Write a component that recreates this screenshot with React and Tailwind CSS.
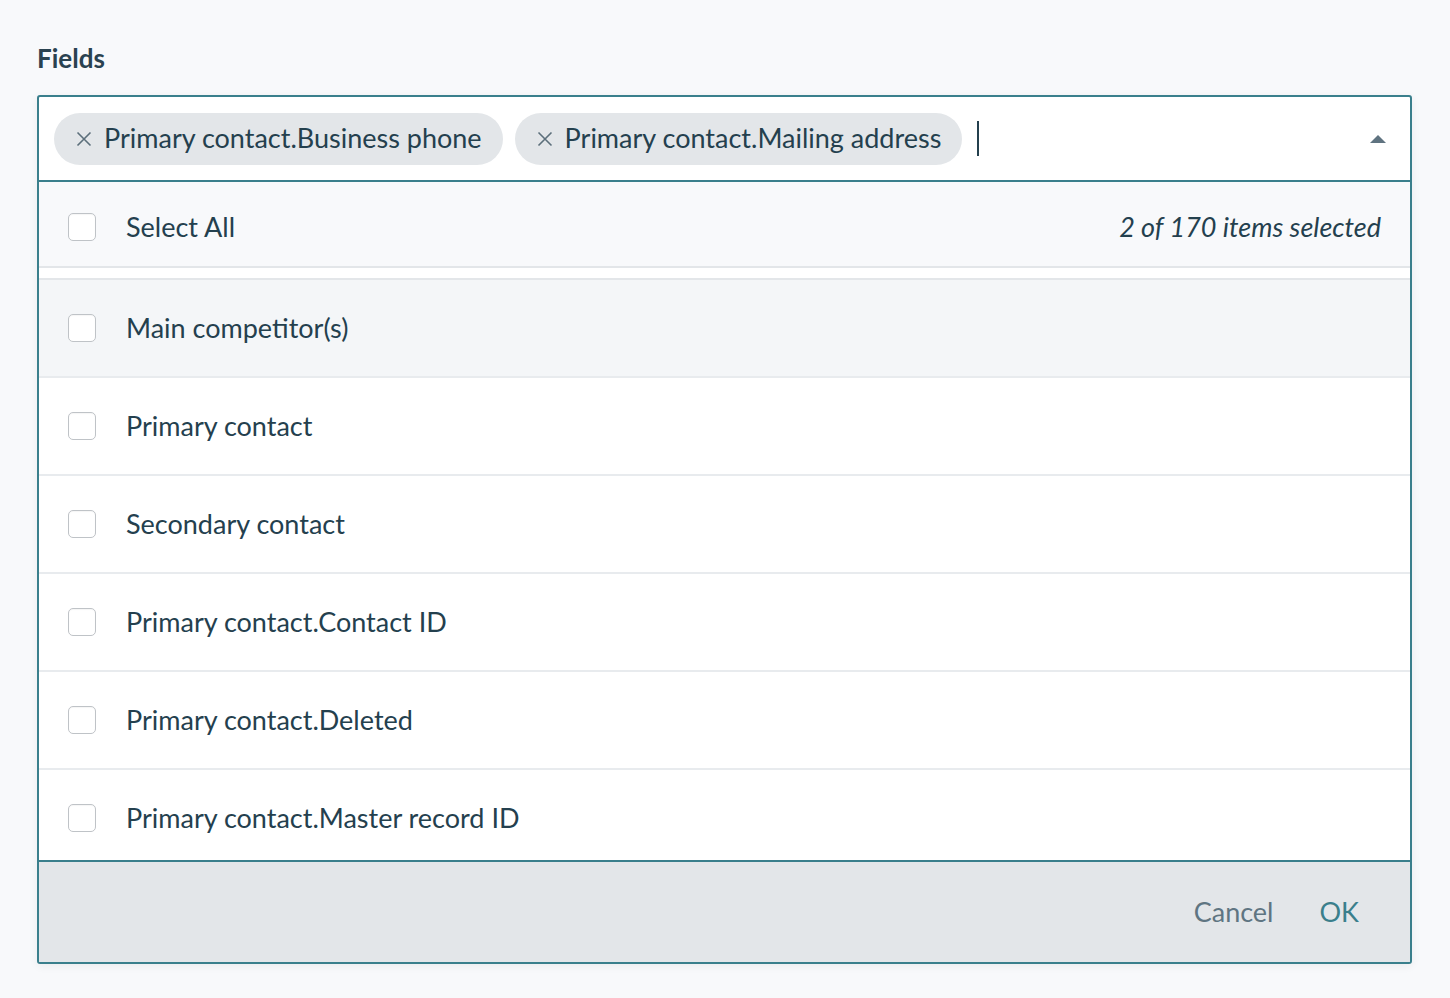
import React from 'react';

const rows = [
  'Main competitor(s)',
  'Primary contact',
  'Secondary contact',
  'Primary contact.Contact ID',
  'Primary contact.Deleted',
  'Primary contact.Master record ID',
];

const Checkbox = () => (
  <span className="block w-[28px] h-[28px] shrink-0 rounded-[5px] border border-[#bfc3c7] bg-white shadow-[inset_0_1px_1px_rgba(0,0,0,0.04)]" />
);

const Chip = ({ label }) => (
  <span className="flex items-center h-[52px] rounded-full bg-[#e3e6e9] pl-[22px] pr-[21px] gap-[12px] text-[27px] text-[#24404e]">
    <svg className="w-[16px] h-[16px]" viewBox="0 0 16 16" fill="none" stroke="#5c6f7b" strokeWidth="1.6">
      <path d="M1.5 1.5l13 13M14.5 1.5l-13 13" />
    </svg>
    {label}
  </span>
);

const Row = ({ label, shaded }) => (
  <div className={`flex items-center h-[98px] shrink-0 pl-[29px] border-b-2 border-[#e8ebee] ${shaded ? 'bg-[#f4f6f8]' : 'bg-white'}`}>
    <Checkbox />
    <span className="ml-[30px] text-[27px]">{label}</span>
  </div>
);

export default function App() {
  return (
    <div className="min-h-[998px] bg-[#f8f9fb] px-[37px] pt-[41px] font-['Lato',sans-serif] text-[#24404e]">
      <div className="text-[26px] font-bold leading-[34px] text-[#2a4250]">Fields</div>

      <div className="mt-[20px] w-[1375px] rounded-[3px] border-2 border-[#3a7f8c] bg-white shadow-[0_2px_10px_rgba(0,0,0,0.06)] overflow-hidden">
        {/* input with chips */}
        <div className="flex items-center h-[85px] pl-[15px] pr-[24px] gap-[12px] border-b-2 border-[#3a7f8c]">
          <Chip label="Primary contact.Business phone" />
          <Chip label="Primary contact.Mailing address" />
          <span className="ml-[3px] block w-[2px] h-[35px] bg-[#24404e]" />
          <div className="flex-1" />
          <svg className="w-[16px] h-[8px]" viewBox="0 0 16 8">
            <path d="M0 8L8 0l8 8z" fill="#5f7380" />
          </svg>
        </div>

        {/* select all */}
        <div className="flex items-center h-[86px] pt-[6px] pl-[29px] pr-[29px] bg-[#f8f9fb] border-b-2 border-[#e3e6e9]">
          <Checkbox />
          <span className="ml-[30px] text-[27px]">Select All</span>
          <span className="ml-auto text-[27px] italic">2 of 170 items selected</span>
        </div>

        <div className="h-[12px] bg-white border-b-2 border-[#e3e6e9]" />

        <div className="flex flex-col h-[580px] overflow-hidden">
          {rows.map((r, i) => (
            <Row key={r} label={r} shaded={i === 0} />
          ))}
        </div>

        {/* footer */}
        <div className="flex items-center justify-end h-[102px] pr-[51px] gap-[46px] bg-[#e3e6e9] border-t-2 border-[#3a7f8c] text-[27px]">
          <span className="text-[#5f7582]">Cancel</span>
          <span className="text-[#3a7f8c]">OK</span>
        </div>
      </div>
    </div>
  );
}
